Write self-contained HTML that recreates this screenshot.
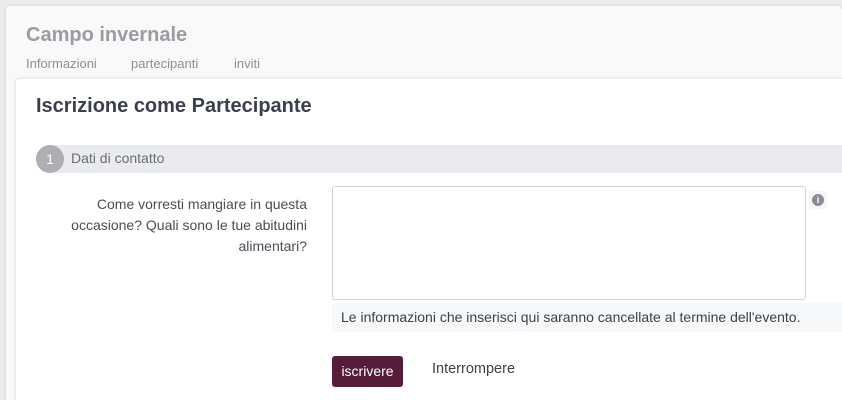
<!DOCTYPE html>
<html><head><meta charset="utf-8"><style>
*{box-sizing:border-box;margin:0;padding:0}
html,body{width:842px;height:400px;overflow:hidden}
body{background:#ececee;font-family:"Liberation Sans",sans-serif;position:relative}
.bg{position:absolute;left:6px;top:6px;width:836px;height:394px;background:#f9f9fa;border-radius:4px 4px 0 0;box-shadow:0 0 3px rgba(0,0,0,.12)}
.t{position:absolute;left:26px;top:24px;font-size:20px;font-weight:bold;color:#9a9ca3}
.tabs{position:absolute;top:56px;font-size:13px;color:#8d8f96}
.modal{position:absolute;left:16px;top:79px;width:826px;height:321px;background:#fff;border-radius:4px 0 0 0;box-shadow:0 0 4px rgba(0,0,0,.15)}
h1{position:absolute;left:20px;top:16px;font-size:20px;font-weight:bold;color:#3b3f4c}
.step{position:absolute;left:20px;top:66px;width:806px;height:28px;background:#e9ebee;border-radius:14px 0 0 14px}
.c{position:absolute;left:0;top:0;width:28px;height:28px;border-radius:50%;background:#adafb5;color:#fff;font-size:14px;text-align:center;line-height:28px}
.step span.l{position:absolute;left:35px;top:5px;font-size:14px;color:#6b6e76}
.lab{position:absolute;left:0;width:291px;top:115px;text-align:right;font-size:14px;line-height:21px;color:#4a4d55;white-space:nowrap}
.ta{position:absolute;left:316px;top:107px;width:474px;height:114px;border:1px solid #cfd1d5;border-radius:3px}
.info{position:absolute;left:793px;top:112px;width:18px;height:18px;background:#f5f6f7;border-radius:3px}
.info i{position:absolute;left:3px;top:3px;width:12px;height:12px;border-radius:50%;background:#8a8d93;color:#fff;font-size:9px;font-style:normal;font-weight:bold;text-align:center;line-height:12px}
.help{position:absolute;left:316px;top:224px;width:510px;height:29px;background:#f7f8f9;font-size:14px;color:#3d4048;padding:6px 0 0 9px;white-space:nowrap}
.btn{position:absolute;left:316px;top:277px;width:71px;height:31px;background:#561d3b;border-radius:3px;color:#fff;font-size:14px;text-align:center;line-height:31px}
.lnk{position:absolute;left:416px;top:282px;font-size:14.5px;color:#3d4048}
</style></head><body>
<div class="bg"></div>
<div class="t">Campo invernale</div>
<div class="tabs" style="left:26px">Informazioni</div>
<div class="tabs" style="left:131px">partecipanti</div>
<div class="tabs" style="left:234px">inviti</div>
<div class="modal">
<h1>Iscrizione come Partecipante</h1>
<div class="step"><div class="c">1</div><span class="l">Dati di contatto</span></div>
<div class="lab">Come vorresti mangiare in questa<br>occasione? Quali sono le tue abitudini<br>alimentari?</div>
<div class="ta"></div>
<div class="info"><i>i</i></div>
<div class="help">Le informazioni che inserisci qui saranno cancellate al termine dell'evento.</div>
<div class="btn">iscrivere</div>
<div class="lnk">Interrompere</div>
</div>
</body></html>
